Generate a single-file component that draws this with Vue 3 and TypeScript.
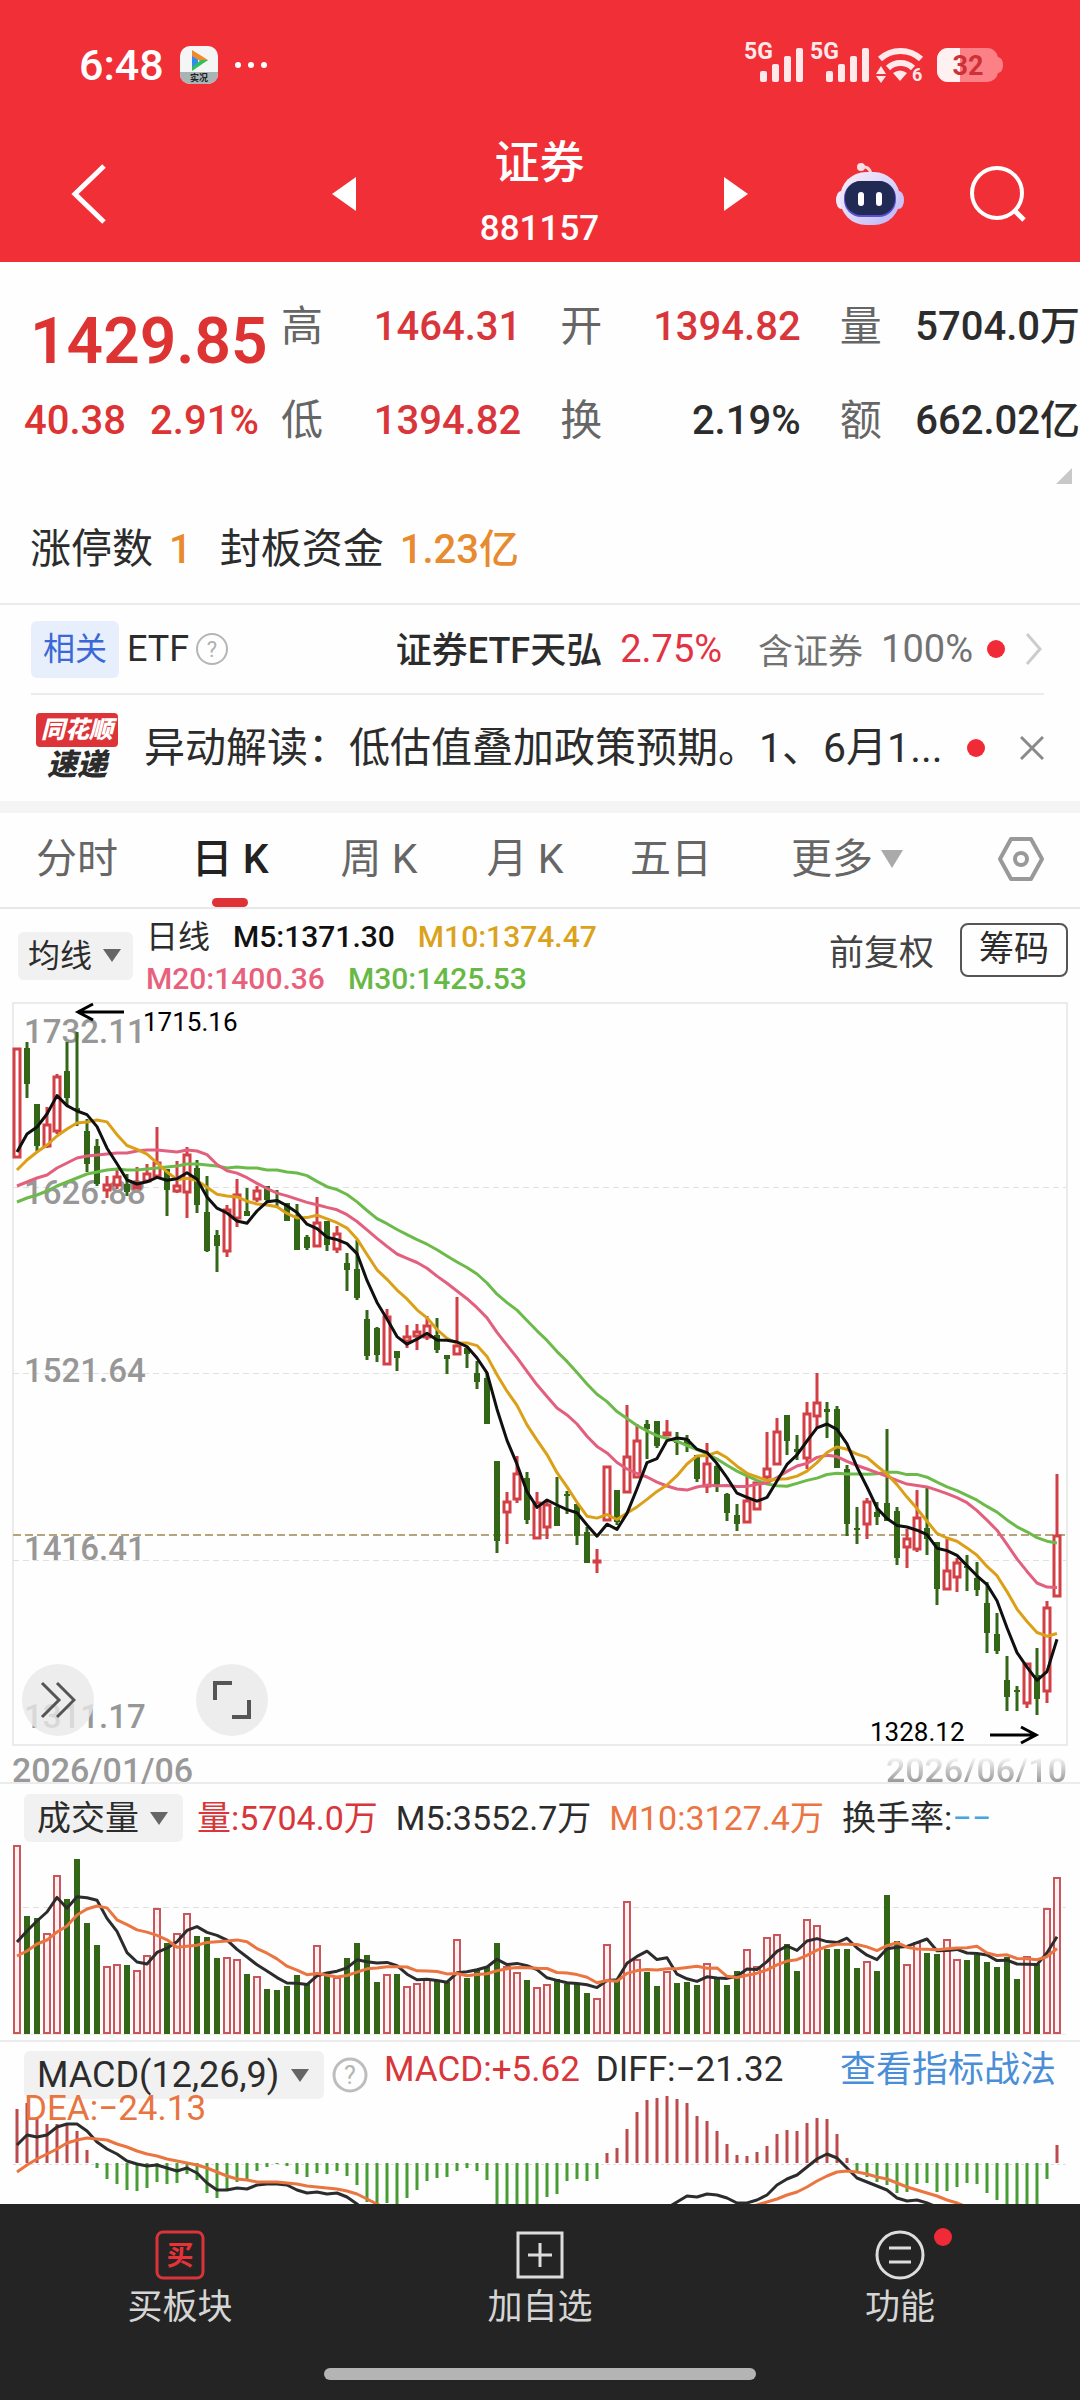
<script setup lang="ts">
type Candle = [high: number, top: number, bottom: number, low: number]

const X0 = 17
const STEP = 10
const x = (i: number): number => X0 + i * STEP

// One letter per trading day: r = rising, g = falling
const trend: string =
  'rggrrggggrrgrrrgrrgg' + 'grrgrggggg' + 'rgrggggrgr' + 'rrggrgggg' +
  'rrgrrgggg' + 'rrgrrggrgggrggg' + 'rrrrggrrgggg' + 'rgggrrggrrggggggrgrr'
const isUp = (i: number): boolean => trend[i] === 'r'

const candles: Candle[] = [
  [46, 46, 156, 156], [40, 46, 82, 96], [102, 102, 144, 149], [105, 122, 145, 146], [72, 74, 130, 132],
  [40, 69, 96, 104], [30, 106, 109, 124], [117, 129, 162, 170], [137, 144, 182, 184], [174, 182, 189, 196],
  [167, 174, 184, 187], [172, 182, 190, 194], [165, 182, 187, 187], [162, 171, 180, 180], [125, 160, 175, 176],
  [167, 167, 188, 214], [159, 183, 190, 191], [145, 152, 191, 216], [158, 166, 203, 211], [174, 210, 249, 250],
  [228, 233, 244, 270], [203, 207, 250, 255], [177, 192, 217, 225], [186, 209, 214, 214], [184, 188, 198, 200],
  [184, 184, 198, 200], [188, 198, 200, 204], [201, 201, 219, 219], [202, 216, 248, 248], [233, 235, 246, 248],
  [195, 220, 245, 245], [219, 219, 243, 249], [224, 231, 248, 251], [251, 261, 268, 289], [238, 267, 296, 298],
  [308, 317, 354, 358], [325, 326, 353, 360], [307, 314, 363, 363], [349, 349, 356, 369], [323, 334, 340, 346],
  [322, 329, 335, 348], [314, 323, 336, 338], [316, 333, 348, 351], [353, 353, 357, 372], [295, 343, 353, 353],
  [344, 346, 352, 366], [359, 371, 380, 387], [371, 376, 422, 422], [459, 459, 539, 551], [490, 499, 511, 542],
  [454, 471, 498, 501], [470, 476, 518, 522], [490, 500, 537, 537], [498, 502, 526, 537], [475, 505, 524, 524],
  [489, 492, 494, 512], [502, 502, 534, 543], [525, 530, 561, 561], [547, 558, 560, 571], [464, 464, 519, 519],
  [488, 488, 520, 523], [403, 454, 491, 491], [422, 438, 476, 476], [418, 422, 427, 457], [419, 419, 444, 446],
  [418, 430, 434, 434], [430, 439, 441, 453], [433, 437, 444, 450], [453, 453, 477, 480], [441, 461, 485, 491],
  [462, 464, 485, 490], [491, 492, 511, 519], [502, 513, 522, 529], [475, 498, 521, 521], [480, 480, 508, 508],
  [430, 466, 476, 478], [416, 429, 463, 463], [413, 413, 439, 453], [433, 447, 450, 458], [400, 411, 457, 467],
  [371, 400, 415, 426], [400, 407, 410, 436], [404, 407, 466, 466], [463, 467, 522, 534], [505, 526, 528, 542],
  [496, 499, 523, 537], [500, 510, 515, 523], [427, 501, 519, 519], [505, 509, 556, 563], [527, 536, 546, 566],
  [488, 515, 548, 550], [485, 526, 537, 553], [540, 540, 587, 603], [537, 568, 588, 588], [556, 560, 576, 590],
  [553, 564, 566, 589], [560, 576, 588, 594], [580, 601, 631, 651], [611, 632, 649, 652], [654, 678, 695, 709],
  [684, 688, 690, 709], [661, 661, 702, 706], [646, 673, 697, 713], [599, 605, 690, 701], [472, 533, 595, 595],
]

const volumes: number[] = [
  1, 72, 74, 89, 31, 55, 15, 79, 101, 122, 120, 121, 126, 111, 64, 99, 89, 69, 92, 93,
  114, 113, 115, 130, 132, 145, 146, 142, 131, 139, 101, 132, 133, 114, 99, 111, 138, 130, 130, 142,
  139, 135, 137, 138, 95, 134, 125, 123, 99, 122, 128, 136, 143, 140, 135, 140, 140, 149, 154, 100,
  136, 57, 115, 128, 142, 127, 139, 138, 141, 119, 133, 141, 127, 105, 122, 93, 90, 100, 127, 75,
  81, 105, 105, 105, 124, 117, 127, 51, 97, 120, 98, 109, 110, 95, 115, 116, 111, 118, 123, 113,
  135, 112, 120, 64, 33,
]

const MACD_ZERO = 121
const macd: number[] = [
  67, 61, 76, 82, 82, 82, 89, 108, 126, 137, 142, 148, 149, 146, 140, 142, 141, 132, 138, 151,
  156, 147, 140, 137, 129, 125, 122, 124, 132, 135, 131, 132, 129, 134, 143, 160, 166, 161, 165, 156,
  148, 139, 136, 135, 129, 126, 129, 138, 166, 166, 166, 166, 166, 155, 152, 139, 137, 139, 137, 111,
  106, 87, 70, 58, 56, 54, 57, 61, 74, 79, 89, 102, 113, 114, 110, 104, 92, 88, 89, 81,
  76, 77, 92, 116, 130, 135, 140, 143, 151, 150, 142, 141, 150, 149, 145, 141, 142, 151, 158, 166,
  166, 166, 166, 137, 103,
]

// Average of the last n values; the leading points come from days before the window
function average(values: number[], n: number, lead: number[]): string {
  return values
    .map((_, i) => {
      const y = i < n - 1 ? lead[i] : values.slice(i - n + 1, i + 1).reduce((a, b) => a + b, 0) / n
      return `${x(i)},${Math.round(y * 10) / 10}`
    })
    .join(' ')
}
const line = (start: number, ys: number[]): string => ys.map((y, i) => `${x(start + i)},${y}`).join(' ')

const closes = candles.map((c, i) => (isUp(i) ? c[1] : c[2]))
const priceLines = [
  { color: '#6cbb4a', points: average(closes, 30, [200, 196, 193, 189, 184, 180, 176, 172, 170, 168, 167, 168, 168, 167, 166, 165, 164, 162, 162, 163, 164, 166, 165, 166, 166, 168, 168, 170, 171]) },
  { color: '#e35f7e', points: average(closes, 20, [184, 180, 176, 173, 166, 161, 156, 154, 153, 152, 151, 151, 149, 148, 148, 149, 150, 148, 149]) },
  { color: '#dba017', points: average(closes, 10, [168, 158, 150, 143, 134, 127, 121, 120, 118]) },
  { color: '#101010', points: average(closes, 5, [150, 132, 125, 112]) },
]
const volumeLines = [
  { color: '#2c2c2c', points: average(volumes, 5, [98, 87, 77, 68]) },
  { color: '#eb7540', points: average(volumes, 10, [112, 107, 100, 96, 88, 82, 71, 65, 62]) },
]
const macdLines = [
  { color: '#2c2c2c', points: line(0, [103, 93, 95, 93, 85, 82, 82, 89, 100, 107, 112, 119, 122, 124, 123, 126, 129, 126, 131, 141, 148, 148, 146, 147, 143, 142, 142, 143, 148, 151, 150, 152, 151, 155, 162, 170]) },
  { color: '#2c2c2c', points: line(65, [166, 160, 154, 155, 152, 153, 156, 161, 161, 158, 153, 143, 137, 133, 125, 117, 112, 116, 126, 136, 140, 144, 148, 156, 159, 158, 161, 165]) },
  { color: '#eb7540', points: line(0, [130, 123, 117, 112, 107, 101, 98, 96, 97, 98, 102, 105, 109, 112, 114, 117, 119, 121, 123, 126, 130, 134, 137, 138, 140, 140, 140, 141, 142, 144, 145, 146, 147, 149, 152, 157, 162, 167]) },
  { color: '#eb7540', points: line(73, [165, 163, 160, 157, 153, 150, 145, 139, 134, 130, 129, 130, 132, 135, 137, 141, 145, 148, 151, 154, 158, 161, 165]) },
]

const quotes = [
  { label: '高', value: '1464.31', red: true },
  { label: '开', value: '1394.82', red: true },
  { label: '量', value: '5704.0万', red: false },
  { label: '低', value: '1394.82', red: true },
  { label: '换', value: '2.19%', red: false },
  { label: '额', value: '662.02亿', red: false },
]
const tabs = ['分时', '日 K', '周 K', '月 K', '五日']
const axis = [
  { y: 41, text: '1732.11' },
  { y: 202, text: '1626.88' },
  { y: 380, text: '1521.64' },
  { y: 558, text: '1416.41' },
  { y: 726, text: '1311.17' },
]
</script>

<template>
  <div class="page">
    <header class="top">
      <div class="status">
        <span class="time">6:48</span>
        <svg class="app-icon" viewBox="0 0 38 38" width="38" height="38">
          <rect width="38" height="38" rx="10" fill="#f3f6f4" />
          <path d="M0 26h38v2a10 10 0 0 1-10 10H10A10 10 0 0 1 0 28z" fill="#a9b4b6" />
          <path d="M12 5v18l6-5V10z" fill="#2d8df0" />
          <path d="M12 4l16 10-5 3-11-7z" fill="#f08a32" />
          <path d="M28 14L12 25v-4l9-7z" fill="#2fbf5f" />
          <text x="19" y="35" text-anchor="middle" font-size="9" font-weight="700" fill="#222">实况</text>
        </svg>
        <svg viewBox="0 0 32 6" width="32" height="6" fill="#fff">
          <circle cx="3" cy="3" r="3" /><circle cx="16" cy="3" r="3" /><circle cx="29" cy="3" r="3" />
        </svg>
        <div class="status-right">
          <svg v-for="n in 2" :key="n" viewBox="0 0 60 42" width="60" height="42" fill="#ffe9ea">
            <text x="0" y="19" font-size="23" font-weight="700">5G</text>
            <rect x="16" y="31" width="7" height="11" rx="2" />
            <rect x="28" y="24" width="7" height="18" rx="2" />
            <rect x="40" y="16" width="7" height="26" rx="2" />
            <rect x="52" y="8" width="7" height="34" rx="2" />
          </svg>
          <svg viewBox="0 0 48 38" width="48" height="38" fill="#ffe9ea">
            <path d="M4 13a30 30 0 0 1 41 0" fill="none" stroke="#ffe9ea" stroke-width="6" />
            <path d="M12 22a18 18 0 0 1 25 0" fill="none" stroke="#ffe9ea" stroke-width="6" />
            <path d="M17 27q7-5 14 0l-7 8z" />
            <path d="M0 28l5-8 5 8zM0 30h10l-5 7z" />
            <text x="36" y="35" font-size="18" font-weight="700">6</text>
          </svg>
          <svg viewBox="0 0 67 34" width="67" height="34">
            <path d="M11 0h39a11 11 0 0 1 11 9q5 1 5 8t-5 8a11 11 0 0 1-11 9H11A11 11 0 0 1 0 23V11A11 11 0 0 1 11 0z" fill="#fb8186" />
            <path d="M11 0h12v34H11A11 11 0 0 1 0 23V11A11 11 0 0 1 11 0z" fill="#fff1f1" />
            <text x="31" y="27" text-anchor="middle" font-size="27" font-weight="700" fill="#cf3036">32</text>
          </svg>
        </div>
      </div>
      <nav class="title-bar">
        <button class="back" aria-label="返回">
          <svg viewBox="0 0 36 60" width="36" height="60"><path d="M33 2L4 30l29 28" fill="none" stroke="#fff" stroke-width="5" /></svg>
        </button>
        <div class="switcher">
          <button aria-label="上一个"><svg viewBox="0 0 24 34" width="24" height="34"><path d="M24 0v34L0 17z" fill="#fff" /></svg></button>
          <h1><span class="name">证券</span><span class="code">881157</span></h1>
          <button aria-label="下一个"><svg viewBox="0 0 24 34" width="24" height="34"><path d="M0 0v34l24-17z" fill="#fff" /></svg></button>
        </div>
        <button aria-label="助手">
          <svg viewBox="0 0 68 64" width="68" height="64">
            <defs>
              <linearGradient id="shell" x1="0" y1="0" x2="1" y2="1">
                <stop offset="0" stop-color="#fbeff4" /><stop offset="0.500" stop-color="#ddd6fa" /><stop offset="1" stop-color="#b9b2f4" />
              </linearGradient>
            </defs>
            <path d="M24 5q10-2 11 8" fill="none" stroke="#f7d9e2" stroke-width="3" />
            <circle cx="25" cy="5" r="4" fill="#f7dfe6" />
            <ellipse cx="5" cy="38" rx="5" ry="9" fill="#efeaff" /><ellipse cx="63" cy="38" rx="5" ry="9" fill="#cbc3f7" />
            <rect x="4" y="10" width="60" height="53" rx="26" fill="url(#shell)" />
            <rect x="8" y="19" width="52" height="36" rx="17" fill="#5b4fd6" />
            <rect x="9" y="19" width="50" height="34" rx="16" fill="#202a52" />
            <rect x="22" y="30" width="6" height="14" rx="3" fill="#fff" /><rect x="40" y="30" width="6" height="14" rx="3" fill="#fff" />
          </svg>
        </button>
        <button aria-label="搜索">
          <svg viewBox="0 0 58 58" width="58" height="58" fill="none" stroke="#fff" stroke-width="4">
            <circle cx="28" cy="28" r="25" /><path d="M46 46l9 9" stroke-width="5" />
          </svg>
        </button>
      </nav>
    </header>

    <section class="quote">
      <div class="quote-main">
        <div class="last">
          <strong>1429.85</strong>
          <div class="change"><span>40.38</span><span>2.91%</span></div>
        </div>
        <dl class="quote-grid">
          <div v-for="q in quotes" :key="q.label">
            <dt>{{ q.label }}</dt>
            <dd :class="{ red: q.red }">{{ q.value }}</dd>
          </div>
        </dl>
      </div>
      <svg class="corner" viewBox="0 0 16 16" width="16" height="16"><path d="M16 0v16H0z" fill="#c8c8c8" /></svg>
      <p class="limits">
        <span>涨停数</span><b>1</b><span class="second">封板资金</span><b>1.23亿</b>
      </p>
    </section>

    <section class="etf">
      <span class="tag">相关</span>
      <span>ETF</span>
      <svg viewBox="0 0 34 34" width="34" height="34">
        <circle cx="17" cy="17" r="15" fill="none" stroke="#b5b5b5" stroke-width="2" />
        <text x="17" y="25" text-anchor="middle" font-size="22" fill="#b0b0b0">?</text>
      </svg>
      <a href="#etf">证券ETF天弘</a>
      <span class="rise">2.75%</span>
      <span class="grey">含证券</span>
      <span class="grey share">100%</span>
      <i class="dot"></i>
      <svg viewBox="0 0 20 34" width="20" height="34"><path d="M3 2l13 15L3 32" fill="none" stroke="#ccc" stroke-width="3" /></svg>
    </section>

    <section class="news">
      <div class="logo">
        <span class="logo-top">同花顺</span>
        <span class="logo-bottom">速递</span>
      </div>
      <a href="#news">异动解读：低估值叠加政策预期。1、6月1...</a>
      <i class="dot"></i>
      <button aria-label="关闭">
        <svg viewBox="0 0 24 24" width="24" height="24"><path d="M1 1l22 22M23 1L1 23" stroke="#8a8a8a" stroke-width="3" /></svg>
      </button>
    </section>

    <nav class="tabs">
      <button v-for="(t, i) in tabs" :key="t" :class="{ active: i === 1 }">{{ t }}</button>
      <button class="more">更多<svg viewBox="0 0 22 18" width="22" height="18"><path d="M0 0h22L11 18z" fill="#aaa" /></svg></button>
      <button class="settings" aria-label="设置">
        <svg viewBox="0 0 46 44" width="46" height="44" fill="none" stroke="#999" stroke-width="4" stroke-linejoin="round">
          <path d="M13 2h20l11 20-11 20H13L2 22z" /><circle cx="23" cy="22" r="6" />
        </svg>
      </button>
    </nav>

    <section class="legend">
      <label class="chip">
        <select aria-label="指标"><option>均线</option></select>
        <svg viewBox="0 0 18 13" width="18" height="13"><path d="M0 0h18L9 13z" fill="#666" /></svg>
      </label>
      <div class="averages">
        <div><span class="kind">日线</span><span class="m5">M5:1371.30</span><span class="m10">M10:1374.47</span></div>
        <div><span class="m20">M20:1400.36</span><span class="m30">M30:1425.53</span></div>
      </div>
      <span class="adjust">前复权</span>
      <button class="chips-button">筹码</button>
    </section>

    <section class="chart">
      <svg class="plot" viewBox="0 0 1080 744">
        <rect x="13" y="1" width="1054" height="742" fill="none" stroke="#ebebeb" stroke-width="2" />
        <g stroke="#e0e0e0" stroke-width="1" stroke-dasharray="6 4">
          <path d="M13 185.500H1066M13 371.500H1066M13 558.500H1066" />
        </g>
        <g font-size="33" fill="#979797" font-weight="500">
          <text v-for="a in axis" :key="a.y" x="24" :y="a.y">{{ a.text }}</text>
        </g>
        <path d="M13 533H1066" stroke="#b5a47c" stroke-width="2" stroke-dasharray="8 4" />
        <g v-for="(c, i) in candles" :key="i">
          <template v-if="isUp(i)">
            <path :d="`M${x(i)} ${c[0]}V${c[1]}M${x(i)} ${c[2]}V${c[3]}`" stroke="#d23f44" stroke-width="3" />
            <rect :x="x(i) - 3" :y="c[1] + 1" width="6" :height="Math.max(c[2] - c[1] - 2, 1)" fill="#fff" stroke="#d23f44" stroke-width="3" />
          </template>
          <template v-else>
            <path :d="`M${x(i)} ${c[0]}V${c[3]}`" stroke="#336717" stroke-width="3" />
            <rect :x="x(i) - 3" :y="c[1]" width="6" :height="c[2] - c[1]" fill="#336717" />
          </template>
        </g>
        <polyline v-for="l in priceLines" :key="l.color" :points="l.points" fill="none" :stroke="l.color" stroke-width="3" stroke-linejoin="round" />
        <g stroke="#000" stroke-width="3" fill="none">
          <path d="M124 10H78M93 2L78 10l15 8" />
          <path d="M990 733h46M1021 725l15 8-15 8" />
        </g>
        <text x="143" y="29" font-size="26" fill="#000">1715.16</text>
        <text x="870" y="739" font-size="26" fill="#000">1328.12</text>
      </svg>
      <div class="floating">
        <button aria-label="展开">
          <svg viewBox="0 0 36 38" width="36" height="38"><path d="M2 2l17 17L2 36M17 2l17 17-17 17" fill="none" stroke="#555" stroke-width="3" /></svg>
        </button>
        <button aria-label="全屏">
          <svg viewBox="0 0 38 38" width="38" height="38"><path d="M2 19V2h17M36 19v17H19" fill="none" stroke="#555" stroke-width="4" /></svg>
        </button>
      </div>
    </section>

    <div class="dates"><time>2026/01/06</time><time class="faded">2026/06/10</time></div>

    <section class="volume">
      <div class="indicator">
        <label class="chip">
          <select aria-label="副图"><option>成交量</option></select>
          <svg viewBox="0 0 18 13" width="18" height="13"><path d="M0 0h18L9 13z" fill="#666" /></svg>
        </label>
        <span class="red">量:5704.0万</span>
        <span>M5:3552.7万</span>
        <span class="orange">M10:3127.4万</span>
        <span>换手率:<span class="cyan">−−</span></span>
      </div>
      <svg class="plot" viewBox="0 0 1080 196">
        <path d="M13 63.500H1066" stroke="#e0e0e0" stroke-dasharray="6 4" />
        <path d="M13 190.500H1066" stroke="#ebebeb" />
        <template v-for="(v, i) in volumes" :key="i">
          <rect v-if="isUp(i)" :x="x(i) - 3" :y="v + 1" width="6" :height="188 - v" fill="#fff1f1" stroke="#c9565b" stroke-width="2" />
          <rect v-else :x="x(i) - 3" :y="v" width="6" :height="190 - v" fill="#336717" />
        </template>
        <polyline v-for="l in volumeLines" :key="l.color" :points="l.points" fill="none" :stroke="l.color" stroke-width="3" stroke-linejoin="round" />
      </svg>
    </section>

    <section class="macd">
      <svg class="plot" viewBox="0 0 1080 162">
        <path d="M13 122.500H1066" stroke="#ddd" stroke-dasharray="3 3" />
        <path
          v-for="(m, i) in macd" :key="i" :d="`M${x(i)} ${MACD_ZERO}V${m}`"
          :stroke="m < MACD_ZERO ? '#bd4a4c' : '#479c33'" stroke-width="3"
        />
        <polyline v-for="(l, i) in macdLines" :key="i" :points="l.points" fill="none" :stroke="l.color" stroke-width="3" stroke-linejoin="round" />
      </svg>
      <div class="macd-text">
        <div class="indicator">
          <label class="chip">
            <select aria-label="指标参数"><option>MACD(12,26,9)</option></select>
            <svg viewBox="0 0 18 13" width="18" height="13"><path d="M0 0h18L9 13z" fill="#666" /></svg>
          </label>
          <svg class="help" viewBox="0 0 36 36" width="36" height="36">
            <circle cx="18" cy="18" r="16" fill="none" stroke="#bdbdbd" stroke-width="3" />
            <text x="18" y="27" text-anchor="middle" font-size="25" fill="#b5b5b5">?</text>
          </svg>
          <span class="red">MACD:+5.62</span>
          <span>DIFF:−21.32</span>
          <a href="#guide">查看指标战法</a>
        </div>
        <span class="dea">DEA:−24.13</span>
      </div>
    </section>

    <footer class="bottom">
      <div class="actions">
        <button>
          <svg viewBox="0 0 50 50" width="50" height="50">
            <rect x="2" y="2" width="46" height="46" rx="6" fill="none" stroke="#d8343a" stroke-width="3" />
            <text x="25" y="35" text-anchor="middle" font-size="27" font-weight="700" fill="#e8323a">买</text>
          </svg>
          <span>买板块</span>
        </button>
        <button>
          <svg viewBox="0 0 50 50" width="50" height="50" fill="none" stroke="#ddd" stroke-width="3">
            <rect x="3" y="3" width="44" height="44" /><path d="M25 13v24M13 25h24" />
          </svg>
          <span>加自选</span>
        </button>
        <button>
          <span class="icon-wrap">
            <svg viewBox="0 0 52 50" width="52" height="50" fill="none" stroke="#ddd" stroke-width="3">
              <circle cx="26" cy="25" r="23" /><path d="M15 18h22M15 32h22" />
            </svg>
            <i class="dot badge"></i>
          </span>
          <span>功能</span>
        </button>
      </div>
      <div class="home"></div>
    </footer>
  </div>
</template>

<style>
body {
  margin: 0;
  background: #fff;
}
</style>

<style scoped>
.page {
  font-family: Roboto, "Noto Sans CJK SC", sans-serif;
  color: #2c2c2c;
  background: #fefefe;
}
button,
select {
  appearance: none;
  border: 0;
  padding: 0;
  margin: 0;
  background: none;
  font: inherit;
  color: inherit;
}
a {
  color: inherit;
  text-decoration: none;
}
svg {
  display: block;
  flex: none;
}
.red {
  color: #d8363a;
}

.top {
  height: 262px;
  background: #f12f37;
  color: #fff;
}
.status {
  display: flex;
  align-items: center;
  height: 86px;
  padding: 22px 76px 0 79px;
}
.time {
  font-size: 43px;
  font-weight: 500;
}
.app-icon {
  margin: 0 17px 0 16px;
}
.status-right {
  display: flex;
  align-items: center;
  gap: 13px;
  margin-left: auto;
}
.status-right svg {
  overflow: visible;
}
.status-right svg:nth-child(-n + 2) {
  margin: 0 -7px 8px 0;
}
.title-bar {
  display: flex;
  align-items: center;
  height: 154px;
  padding: 9px 53px 0 71px;
}
.switcher {
  flex: 1;
  display: flex;
  justify-content: center;
  align-items: center;
  gap: 124px;
  padding: 0 88px 0 224px;
}
.title-bar > button + button {
  margin-left: 65px;
}
h1 {
  display: flex;
  flex-direction: column;
  align-items: center;
  width: 120px;
  margin: 0;
  padding-top: 3px;
  font-weight: 500;
}
.name {
  font-size: 45px;
  line-height: 66px;
}
.code {
  font-size: 35px;
  line-height: 64px;
}

.quote {
  padding-top: 18px;
  border-bottom: 2px solid #ebebeb;
}
.quote-main {
  display: flex;
}
.last {
  width: 281px;
  color: #dd3333;
}
.last strong {
  display: block;
  padding: 2px 0 0 30px;
  font-size: 64px;
  font-weight: 600;
  line-height: 120px;
}
.change {
  display: flex;
  gap: 24px;
  padding-left: 24px;
  font-size: 40px;
  font-weight: 500;
  line-height: 38px;
}
.quote-grid {
  flex: 1;
  display: grid;
  grid-template-columns: repeat(3, 1fr);
  column-gap: 39px;
  margin: 0;
  font-size: 40px;
  line-height: 94px;
}
.quote-grid > div {
  display: flex;
  justify-content: space-between;
  white-space: nowrap;
}
dt {
  font-size: 42px;
  color: #666;
}
dd {
  margin: 0;
  font-weight: 500;
}
.corner {
  margin: 0 8px 0 auto;
}
.limits {
  display: flex;
  margin: 0;
  padding: 12px 30px 0;
  font-size: 41px;
  line-height: 107px;
}
.limits b {
  margin-left: 16px;
  font-weight: 500;
  font-size: 40px;
  color: #e88a2e;
}
.limits .second {
  margin-left: 28px;
}

.etf {
  display: flex;
  align-items: center;
  height: 88px;
  margin: 0 36px 0 31px;
  border-bottom: 2px solid #ebebeb;
  font-size: 36px;
  white-space: nowrap;
}
.tag {
  width: 88px;
  margin-right: 8px;
  border-radius: 6px;
  background: #e7eefc;
  color: #3b68d4;
  font-size: 32px;
  line-height: 57px;
  text-align: center;
}
.etf svg {
  margin-left: 6px;
}
.etf a {
  margin-left: auto;
  padding-bottom: 4px;
  font-size: 36px;
  font-weight: 500;
}
.etf .rise {
  margin: 0 36px 0 18px;
  font-size: 38px;
  color: #e23345;
}
.etf .grey {
  margin-right: 18px;
  padding-bottom: 2px;
  font-size: 35px;
  color: #727272;
}
.etf .share {
  padding: 0;
  font-size: 38px;
}
.dot {
  flex: none;
  width: 18px;
  height: 18px;
  border-radius: 50%;
  background: #f02b37;
}
.etf .dot {
  margin: 0 13px 0 -4px;
}

.news {
  display: flex;
  align-items: center;
  height: 106px;
  padding: 0 36px;
  border-bottom: 12px solid #f4f4f4;
}
.logo {
  display: flex;
  flex-direction: column;
  align-items: center;
  width: 82px;
  margin-right: 26px;
  font-style: italic;
  font-weight: 900;
}
.logo-top {
  width: 82px;
  background: #dc3438;
  border-radius: 4px;
  color: #fff;
  font-size: 24px;
  line-height: 34px;
  text-align: center;
}
.logo-bottom {
  font-size: 30px;
  line-height: 36px;
}
.news a {
  flex: 1;
  padding-bottom: 8px;
  font-size: 41px;
  white-space: nowrap;
}
.news .dot {
  margin-right: 35px;
}

.tabs {
  display: grid;
  grid-template-columns: 154fr 152fr 146fr 146fr 146fr 206fr 130fr;
  height: 94px;
  border-bottom: 2px solid #e8e8e8;
  font-size: 41px;
  line-height: 56px;
  color: #666;
}
.tabs button {
  display: flex;
  align-items: center;
  justify-content: center;
  padding-bottom: 2px;
}
.tabs .active {
  flex-direction: column;
  padding: 0;
  color: #222;
  font-weight: 500;
}
.tabs .active::before {
  content: "";
  height: 7px;
  margin-bottom: auto;
}
.tabs .active::after {
  content: "";
  width: 36px;
  height: 9px;
  margin-top: auto;
  border-radius: 5px;
  background: #df3236;
}
.tabs .more {
  gap: 8px;
}
.tabs .settings {
  justify-content: flex-end;
  padding-right: 36px;
}

.legend {
  display: flex;
  align-items: center;
  height: 93px;
  padding: 0 12px 0 18px;
}
.chip {
  display: flex;
  align-items: center;
  gap: 11px;
  padding: 0 15px 0 13px;
  border-radius: 6px;
  background: #f1f1f1;
  line-height: 48px;
}
.legend .chip {
  gap: 10px;
  padding: 0 12px 0 10px;
  font-size: 32px;
}
.averages {
  margin-left: 13px;
  padding-top: 4px;
  font-size: 30px;
  font-weight: 500;
  line-height: 42px;
}
.averages > div {
  display: flex;
  gap: 23px;
}
.kind {
  font-size: 32px;
  font-weight: 400;
}
.m5 {
  color: #111;
}
.m10 {
  color: #dba21c;
}
.m20 {
  color: #e8607c;
}
.m30 {
  color: #66b944;
}
.adjust {
  margin-left: auto;
  padding-bottom: 12px;
  font-size: 35px;
  color: #444;
}
.chips-button {
  width: 108px;
  margin: 0 0 12px 26px;
  border: 2px solid #555;
  border-radius: 8px;
  font-size: 35px;
  line-height: 50px;
}

.chart {
  position: relative;
}
.plot {
  width: 100%;
  height: auto;
}
.chart .plot {
  overflow: visible;
}
.floating {
  position: absolute;
  left: 22px;
  bottom: 10px;
  display: flex;
  gap: 102px;
}
.floating button {
  display: grid;
  place-items: center;
  width: 72px;
  height: 72px;
  border-radius: 50%;
  background: rgba(232, 232, 232, 0.8);
}
.dates {
  display: flex;
  justify-content: space-between;
  height: 36px;
  padding: 0 13px 0 12px;
  font-size: 34px;
  line-height: 48px;
  color: #999;
  font-weight: 500;
}
.dates .faded {
  mask-image: linear-gradient(transparent 10px, #000 36px);
}

.volume,
.macd {
  border-top: 2px solid #ebebeb;
}
.indicator {
  display: flex;
  gap: 18px;
  padding: 10px 24px 0;
  font-size: 34px;
  line-height: 48px;
  white-space: nowrap;
}
.volume .indicator {
  padding-bottom: 2px;
}
.indicator .chip {
  margin-right: -4px;
}
.orange {
  color: #ea7543;
}
.cyan {
  color: #45a6e3;
}
.macd {
  display: grid;
}
.macd > * {
  grid-area: 1 / 1;
}
.macd .indicator {
  gap: 16px;
  padding-top: 9px;
  font-size: 36px;
}
.macd .indicator > span,
.macd .indicator > a {
  line-height: 38px;
}
.help {
  margin: 6px 0 0 -4px;
}
.indicator a {
  margin-left: auto;
  color: #4a8ed8;
  font-size: 36px;
}
.macd .indicator > span {
  font-size: 35px;
}
.dea {
  display: block;
  padding-left: 24px;
  color: #e87540;
  font-size: 35px;
  line-height: 20px;
}

.bottom {
  position: relative;
  padding: 26px 0 21px;
  background: #242424;
}
.actions {
  display: grid;
  grid-template-columns: repeat(3, 1fr);
  color: #d5d5d5;
  font-size: 35px;
  line-height: 56px;
}
.actions button {
  display: flex;
  flex-direction: column;
  align-items: center;
}
.icon-wrap {
  position: relative;
}
.badge {
  position: absolute;
  top: -2px;
  right: -26px;
}
.home {
  width: 40%;
  height: 12px;
  margin: 32px auto 0;
  border-radius: 6px;
  background: #b4b4b4;
}
</style>
